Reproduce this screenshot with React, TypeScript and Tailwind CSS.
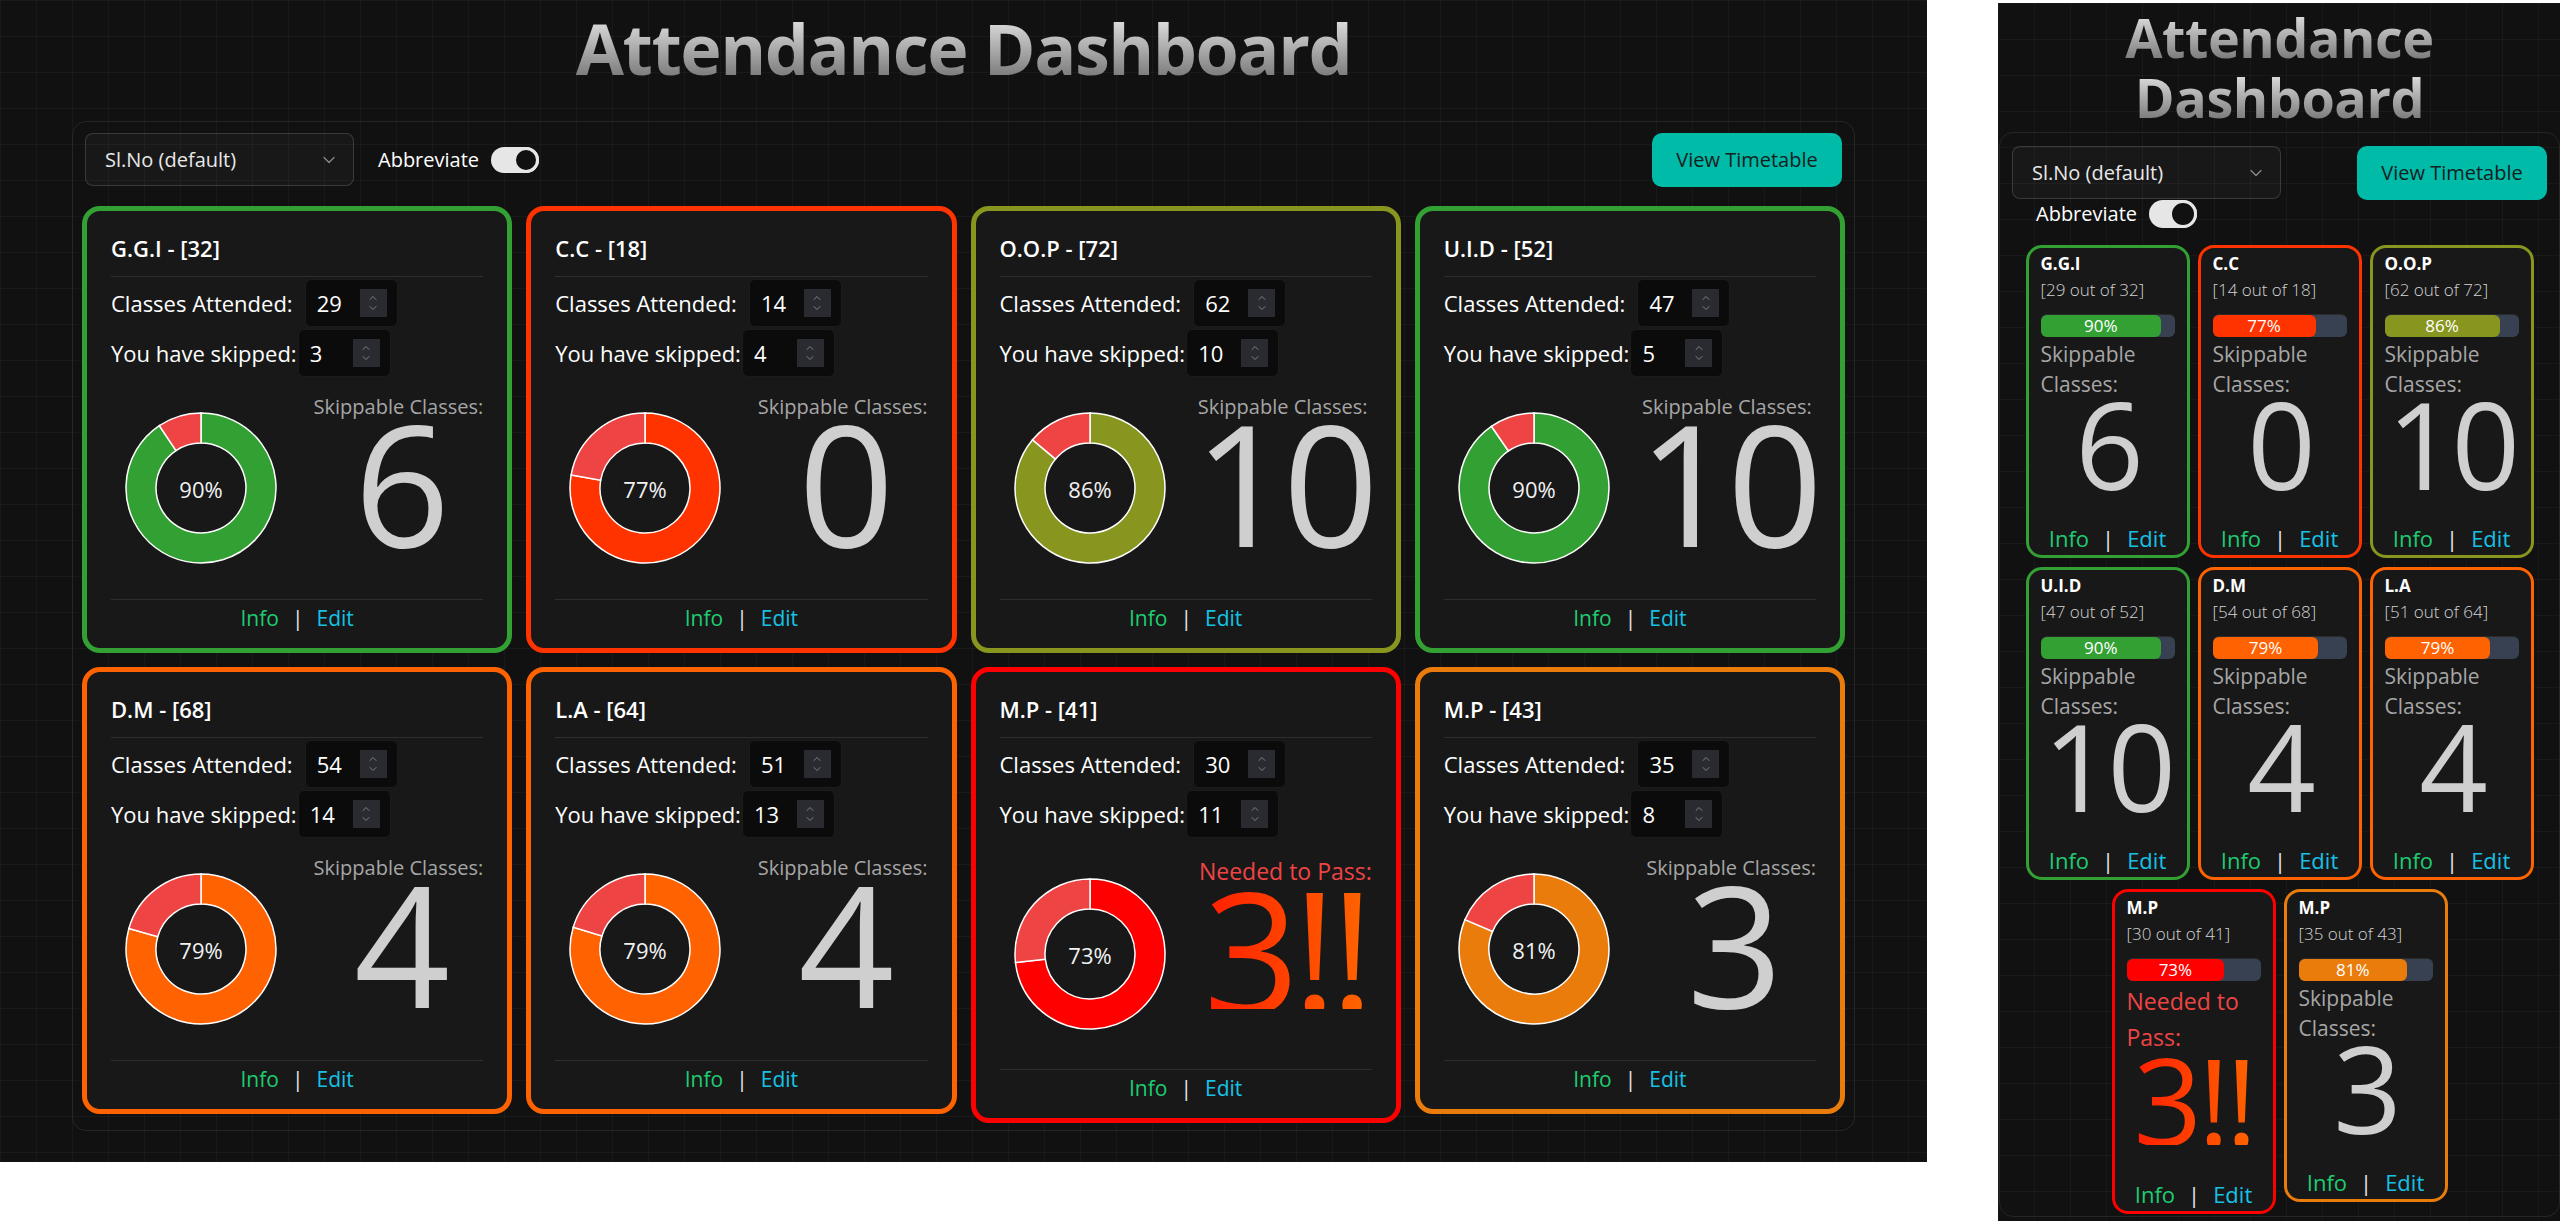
import { ChevronDown, ChevronUp } from "lucide-react";

interface Subject {
  code: string;
  total: number;
  attended: number;
  skipped: number;
  value: number;
  hex: string;
  border: string;
  bg: string;
  needed?: boolean;
}

const subjects: Subject[] = [
  { code: "G.G.I", total: 32, attended: 29, skipped: 3, value: 6, hex: "#33a034", border: "border-[#33a034]", bg: "bg-[#33a034]" },
  { code: "C.C", total: 18, attended: 14, skipped: 4, value: 0, hex: "#ff3300", border: "border-[#ff3300]", bg: "bg-[#ff3300]" },
  { code: "O.O.P", total: 72, attended: 62, skipped: 10, value: 10, hex: "#88951f", border: "border-[#88951f]", bg: "bg-[#88951f]" },
  { code: "U.I.D", total: 52, attended: 47, skipped: 5, value: 10, hex: "#33a034", border: "border-[#33a034]", bg: "bg-[#33a034]" },
  { code: "D.M", total: 68, attended: 54, skipped: 14, value: 4, hex: "#ff6200", border: "border-[#ff6200]", bg: "bg-[#ff6200]" },
  { code: "L.A", total: 64, attended: 51, skipped: 13, value: 4, hex: "#ff6200", border: "border-[#ff6200]", bg: "bg-[#ff6200]" },
  { code: "M.P", total: 41, attended: 30, skipped: 11, value: 3, hex: "#ff0000", border: "border-[#ff0000]", bg: "bg-[#ff0000]", needed: true },
  { code: "M.P", total: 43, attended: 35, skipped: 8, value: 3, hex: "#ea7c0b", border: "border-[#ea7c0b]", bg: "bg-[#ea7c0b]" },
];

const percent = (s: Subject) => Math.floor((s.attended / s.total) * 100);

const Donut = ({ s }: { s: Subject }) => {
  const cx = 76;
  const cy = 76;
  const R = 75;
  const r = 45;
  const split = (s.attended / s.total) * Math.PI * 2;
  const pt = (rad: number, ang: number) => `${cx + rad * Math.sin(ang)} ${cy - rad * Math.cos(ang)}`;
  const seg = (a0: number, a1: number) => {
    const large = a1 - a0 > Math.PI ? 1 : 0;
    return `M ${pt(R, a0)} A ${R} ${R} 0 ${large} 1 ${pt(R, a1)} L ${pt(r, a1)} A ${r} ${r} 0 ${large} 0 ${pt(r, a0)} Z`;
  };
  return (
    <svg width="152" height="152" viewBox="0 0 152 152">
      <path d={seg(0, split)} fill={s.hex} stroke="#ffffff" strokeWidth="1.5" />
      <path d={seg(split, Math.PI * 2)} fill="#ef4444" stroke="#ffffff" strokeWidth="1.5" />
      <text
        x="76"
        y="77"
        textAnchor="middle"
        dominantBaseline="central"
        fill="#f2f2f2"
        fontSize="22"
        fontFamily="'Open Sans', sans-serif"
      >
        {percent(s)}%
      </text>
    </svg>
  );
};

const NumberBox = ({ value, gap }: { value: number; gap: string }) => (
  <div className={`flex h-[48px] w-[93px] items-center justify-between rounded-[6px] border border-[#1c1c1c] bg-[#0b0b0b] pl-[11px] pr-[10px] ${gap}`}>
    <span className="text-[22px] text-white">{value}</span>
    <div className="flex h-[28px] w-[27px] flex-col items-center justify-center bg-[#2a2a31] text-[#8a8a95]">
      <ChevronUp size={12} strokeWidth={1.75} className="-mb-[1px]" />
      <ChevronDown size={12} strokeWidth={1.75} className="-mt-[1px]" />
    </div>
  </div>
);

const Toggle = ({ h }: { h: string }) => (
  <div className={`flex w-[48px] justify-end rounded-full bg-[#e6e6e6] ${h}`}>
    <div className="aspect-square h-full rounded-full border-[3px] border-[#e6e6e6] bg-[#111111]" />
  </div>
);

const Select = () => (
  <div className="flex h-[53px] w-[269px] items-center justify-between rounded-[8px] border border-white/15 bg-white/[0.03] pl-[19px] pr-[14px] text-[20px] text-[#e8e8e8]">
    <span>Sl.No (default)</span>
    <ChevronDown size={20} strokeWidth={1.5} className="text-[#8a8a8a]" />
  </div>
);

const TimetableButton = () => (
  <button className="h-[54px] w-[190px] rounded-[10px] bg-[#00bba7] text-[20px] text-[#15201f]">View Timetable</button>
);

const Links = ({ size }: { size: string }) => (
  <div className={`flex justify-center gap-[13px] ${size}`}>
    <span className="text-[#1fcc72]">Info</span>
    <span className="text-[#e5e5e5]">|</span>
    <span className="text-[#17c1e4]">Edit</span>
  </div>
);

const BigValue = ({ s, size }: { s: Subject; size: string }) =>
  s.needed ? (
    <div className={`flex justify-center ${size}`}>
      <span className="bg-[linear-gradient(to_right,#ff1e00,#ff6400)] bg-clip-text text-transparent">{s.value}!!</span>
    </div>
  ) : (
    <div className={`flex justify-center text-[#cfcfcf] ${size}`}>{s.value}</div>
  );

const DesktopCard = ({ s }: { s: Subject }) => (
  <div className={`rounded-[18px] border-[5px] ${s.border} bg-[#181818] px-6 pt-[19px] pb-3`}>
    <div className="border-b border-[#2e2e2e] pb-[10px] text-[22px] font-semibold leading-[36px] text-white">
      {s.code} - [{s.total}]
    </div>
    <div className="mt-[2px] flex items-center text-[22px] text-white">
      <span>Classes Attended:</span>
      <NumberBox value={s.attended} gap="ml-[12px]" />
    </div>
    <div className="mt-[2px] flex items-center text-[22px] text-white">
      <span>You have skipped:</span>
      <NumberBox value={s.skipped} gap="ml-[1px]" />
    </div>
    <div className={`flex items-center justify-between ${s.needed ? "h-[231px]" : "h-[222px]"}`}>
      <div className="flex w-[180px] justify-center">
        <Donut s={s} />
      </div>
      <div className="flex flex-col items-center self-start pt-[15px]">
        {s.needed ? (
          <span className="text-[23px] leading-[36px] text-[#ef4444]">Needed to Pass:</span>
        ) : (
          <span className="text-[20px] leading-[30px] text-[#a6a6a6]">Skippable Classes:</span>
        )}
        <BigValue s={s} size="text-[168px] leading-[120px] tracking-[-7px]" />
      </div>
    </div>
    <div className="border-t border-[#2e2e2e]">
      <Links size="text-[21px] leading-[36px]" />
    </div>
  </div>
);

const MobileCard = ({ s }: { s: Subject }) => {
  const pct = percent(s);
  return (
    <div className={`flex w-[164px] flex-col rounded-[16px] border-[3px] ${s.border} bg-[#181818] px-3 pt-1`}>
      <div className="text-[17px] font-bold leading-[24px] text-white">{s.code}</div>
      <div className="text-[17px] font-light leading-[28px] text-[#d4d4d4]">
        [{s.attended} out of {s.total}]
      </div>
      <div className="mt-[10px] h-[23px] rounded-md border-t border-[#2a2a2a] bg-[#374151]">
        <div
          className={`flex h-full items-center justify-center rounded-md ${s.bg} text-[17px] text-white`}
          style={{ width: `${pct}%` }}
        >
          {pct}%
        </div>
      </div>
      {s.needed ? (
        <div className="mt-[2px] text-[23px] leading-[36px] text-[#ef4444]">Needed to Pass:</div>
      ) : (
        <div className="mt-[2px] text-[21px] leading-[30px] text-[#a6a6a6]">Skippable Classes:</div>
      )}
      <BigValue s={s} size="text-[120px] leading-[90px] tracking-[-4px]" />
      <div className="mt-[33px]">
        <Links size="text-[22px] leading-[33px]" />
      </div>
    </div>
  );
};

const App = () => {
  return (
    <div className="flex h-[1221px] w-[2560px] items-start overflow-hidden bg-white font-['Open_Sans','Noto_Sans',sans-serif]">
      {/* desktop view */}
      <div className="h-[1162px] w-[1927px] shrink-0 bg-[#111111] bg-[linear-gradient(rgba(255,255,255,0.035)_1px,transparent_1px),linear-gradient(90deg,rgba(255,255,255,0.035)_1px,transparent_1px)] bg-[size:36px_36px] px-[72px]">
        <h1 className="text-center text-[70px] font-bold leading-[96px] tracking-[-1.5px]">
          <span className="bg-[linear-gradient(to_bottom,#ffffff,#5a5a5a)] bg-clip-text text-transparent">
            Attendance Dashboard
          </span>
        </h1>
        <div className="mt-[25px] rounded-[14px] border border-[#262626] px-[9px] pt-[11px] pb-[7px]">
          <div className="mb-[19px] flex items-start justify-between px-[3px]">
            <div className="flex flex-1 flex-wrap items-center">
              <Select />
              <div className="ml-6 flex items-center gap-3 text-[20px] text-white">
                <span>Abbreviate</span>
                <Toggle h="h-[26px]" />
              </div>
            </div>
            <TimetableButton />
          </div>
          <div className="grid grid-cols-4 items-start gap-[14px]">
            {subjects.map((s, i) => (
              <DesktopCard key={i} s={s} />
            ))}
          </div>
        </div>
      </div>

      {/* mobile view */}
      <div className="ml-[71px] mt-[3px] h-[1218px] w-[562px] shrink-0 bg-[#111111] bg-[linear-gradient(rgba(255,255,255,0.035)_1px,transparent_1px),linear-gradient(90deg,rgba(255,255,255,0.035)_1px,transparent_1px)] bg-[size:36px_36px] pl-px pt-[4px]">
        <h1 className="text-center text-[54px] font-bold leading-[60px] tracking-[-0.5px]">
          <span className="bg-[linear-gradient(to_bottom,#ffffff,#5a5a5a)] bg-clip-text text-transparent">
            Attendance Dashboard
          </span>
        </h1>
        <div className="mt-[5px] rounded-[14px] border border-[#262626] px-3 pt-[13px] pb-[2px]">
          <div className="mb-4 flex items-start justify-between">
            <div className="flex min-w-0 flex-1 flex-wrap items-center">
              <Select />
              <div className="ml-6 flex items-center gap-3 text-[20px] text-white">
                <span>Abbreviate</span>
                <Toggle h="h-[28px]" />
              </div>
            </div>
            <TimetableButton />
          </div>
          <div className="flex flex-wrap items-start justify-center gap-x-2 gap-y-[9px]">
            {subjects.map((s, i) => (
              <MobileCard key={i} s={s} />
            ))}
          </div>
        </div>
      </div>
    </div>
  );
};

export default App;
